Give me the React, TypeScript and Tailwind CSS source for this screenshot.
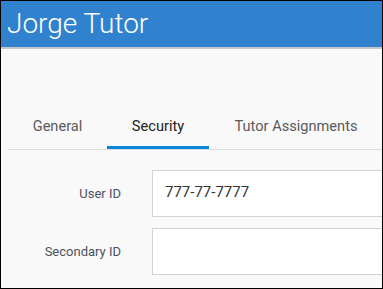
const tabs = [
  { label: 'General', width: 'w-[99px]', active: false },
  { label: 'Security', width: 'w-[102px]', active: true },
  { label: 'Tutor Assignments', width: 'w-[174px]', active: false },
]

function Field({ label, value }: { label: string; value?: string }) {
  return (
    <div className="flex items-center">
      <label className="w-[120px] shrink-0 text-right text-[13px] text-[#4b5160]">{label}</label>
      <div className="ml-[31px] h-[47px] w-[260px] shrink-0 border border-[#cfd3dc] bg-white flex items-center px-[12px] pb-[2px] text-[15px] text-[#333]">
        {value}
      </div>
    </div>
  )
}

export default function App() {
  return (
    <div
      className="w-[383px] h-[289px] border border-black bg-[#f9f9f9] overflow-hidden"
      style={{ fontFamily: 'Roboto, "Liberation Sans", sans-serif' }}
    >
      <header className="h-[48px] bg-[#3182ce] border-b-2 border-[#c2c6cc] flex items-center pl-[6px]">
        <h1 className="text-[28px] font-light text-white leading-none">Jorge Tutor</h1>
      </header>

      <nav className="mt-[60px] ml-[7px] flex border-b border-[#dcdcdc]">
        {tabs.map((tab) => (
          <div
            key={tab.label}
            className={`${tab.width} shrink-0 h-[40px] flex items-center justify-center text-[14.6px] border-b-[3px] ${
              tab.active ? 'border-[#0a86da] text-[#222]' : 'border-transparent text-[#5a5a5a]'
            }`}
          >
            <span className="mb-[1px]">{tab.label}</span>
          </div>
        ))}
      </nav>

      <div className="mt-[20px] flex flex-col gap-[11px]">
        <Field label="User ID" value="777-77-7777" />
        <Field label="Secondary ID" />
      </div>
    </div>
  )
}
